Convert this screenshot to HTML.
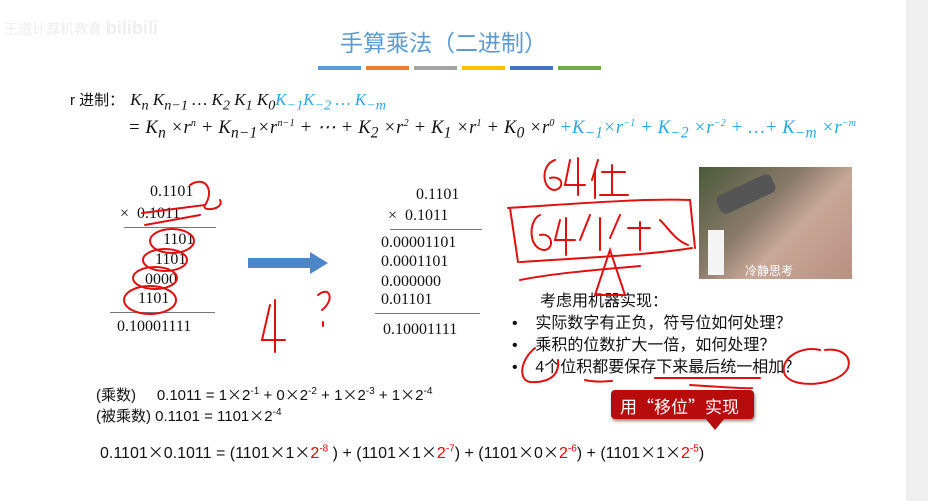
<!DOCTYPE html>
<html><head><meta charset="utf-8"><style>
body{margin:0;width:928px;height:501px;background:#fff;position:relative;overflow:hidden;font-family:"Liberation Sans","Noto Sans CJK SC",sans-serif;color:#111}
.a{position:absolute;white-space:nowrap}
.s{font-family:"Liberation Serif","Noto Serif CJK SC",serif;font-size:16px}
.bar{position:absolute;top:66px;height:4px;width:43px}
.ln{position:absolute;height:1px;background:#777}
i{font-family:"Liberation Serif",serif}
.b{color:#2aa7e0}
sup{font-size:10px}
.r{color:#e00}
.x{font-family:"Noto Sans CJK SC",sans-serif}
</style></head><body>
<div style="position:absolute;right:0;top:0;width:22px;height:501px;background:#efefef"></div>
<div class="a" style="left:4px;top:18px;font-size:14px;color:#eee">王道计算机教育 <b style="font-size:18px">bilibili</b></div>
<div class="a" style="left:340px;top:24px;font-size:23px;color:#5b9bd5">手算乘法（二进制）</div>
<div class="bar" style="left:318px;background:#5b9bd5"></div>
<div class="bar" style="left:366px;background:#ed7d31"></div>
<div class="bar" style="left:414px;background:#a5a5a5"></div>
<div class="bar" style="left:462px;background:#ffc000"></div>
<div class="bar" style="left:510px;background:#4472c4"></div>
<div class="bar" style="left:558px;background:#70ad47"></div>
<div class="a" style="left:70px;top:89px;font-size:15px">r 进制：<i style="font-size:17px;margin-left:6px">K<sub>n</sub> K<sub>n−1</sub> … K<sub>2</sub> K<sub>1</sub> K<sub>0</sub><span class="b">K<sub>−1</sub>K<sub>−2</sub> … K<sub>−m</sub></span></i></div>
<div class="a" style="left:128px;top:116px;font-size:18.5px;letter-spacing:0.2px"><i>= K<sub>n</sub> ×r<sup>n</sup> + K<sub>n−1</sub>×r<sup>n−1</sup> + ⋯ + K<sub>2</sub> ×r<sup>2</sup> + K<sub>1</sub> ×r<sup>1</sup> + K<sub>0</sub> ×r<sup>0</sup> <span class="b">+K<sub>−1</sub>×r<sup>−1</sup> + K<sub>−2</sub> ×r<sup>−2</sup> + …+ K<sub>−m</sub> ×r<sup>−m</sup></span></i></div>

<div class="a s" style="left:150px;top:183px">0.1101</div>
<div class="a s" style="left:120px;top:205px">×&nbsp;&nbsp;0.1011</div>
<div class="ln" style="left:124px;top:227px;width:92px"></div>
<div class="a s" style="left:163px;top:231px">1101</div>
<div class="a s" style="left:155px;top:251px">1101</div>
<div class="a s" style="left:145px;top:271px">0000</div>
<div class="a s" style="left:138px;top:290px">1101</div>
<div class="ln" style="left:110px;top:312px;width:105px"></div>
<div class="a s" style="left:117px;top:318px">0.10001111</div>

<svg style="position:absolute;left:248px;top:252px" width="82" height="22"><path d="M0 6H62V0L80 11L62 22V16H0Z" fill="#4a86c8"/></svg>

<div class="a s" style="left:416px;top:186px">0.1101</div>
<div class="a s" style="left:388px;top:207px">×&nbsp;&nbsp;0.1011</div>
<div class="ln" style="left:390px;top:229px;width:92px"></div>
<div class="a s" style="left:381px;top:234px">0.00001101</div>
<div class="a s" style="left:381px;top:253px">0.0001101</div>
<div class="a s" style="left:381px;top:273px">0.000000</div>
<div class="a s" style="left:381px;top:291px">0.01101</div>
<div class="ln" style="left:375px;top:313px;width:105px"></div>
<div class="a s" style="left:383px;top:321px">0.10001111</div>

<div style="position:absolute;left:699px;top:167px;width:153px;height:112px;background:linear-gradient(135deg,#4a5a3a 0%,#8a7a6a 40%,#c8a898 60%,#b89080 100%)"></div>
<div style="position:absolute;left:716px;top:184px;width:60px;height:20px;background:#555;border-radius:6px;transform:rotate(-25deg)"></div>
<div style="position:absolute;left:708px;top:230px;width:16px;height:45px;background:#f4f4f4"></div>
<div class="a" style="left:745px;top:262px;font-size:12px;color:#fff">冷静思考</div>

<div class="a" style="left:540px;top:287px;font-size:16px">考虑用机器实现：</div>
<div class="a" style="left:512px;top:309px;font-size:16px">•&nbsp;&nbsp;&nbsp;&nbsp;实际数字有正负，符号位如何处理？</div>
<div class="a" style="left:512px;top:331px;font-size:16px">•&nbsp;&nbsp;&nbsp;&nbsp;乘积的位数扩大一倍，如何处理？</div>
<div class="a" style="left:512px;top:353px;font-size:16px">•&nbsp;&nbsp;&nbsp;&nbsp;4个位积都要保存下来最后统一相加？</div>

<div style="position:absolute;left:611px;top:390px;width:143px;height:29px;background:#b80c0c;border-radius:4px;box-shadow:1px 2px 3px #888"></div>
<div style="position:absolute;left:705px;top:418px;width:0;height:0;border-left:10px solid transparent;border-right:10px solid transparent;border-top:12px solid #b80c0c"></div>
<div class="a" style="left:620px;top:393px;font-size:17px;color:#fff">用<span class="x">“</span>移位<span class="x">”</span>实现</div>

<div class="a" style="left:96px;top:384px;font-size:15px">(乘数)&nbsp;&nbsp;&nbsp;&nbsp; 0.1011 = 1<span class="x">×</span>2<sup>-1</sup> + 0<span class="x">×</span>2<sup>-2</sup> + 1<span class="x">×</span>2<sup>-3</sup> + 1<span class="x">×</span>2<sup>-4</sup></div>
<div class="a" style="left:96px;top:405px;font-size:15px">(被乘数) 0.1101 = 1101<span class="x">×</span>2<sup>-4</sup></div>
<div class="a" style="left:100px;top:439px;font-size:16px">0.1101<span class="x">×</span>0.1011 = (1101<span class="x">×</span>1<span class="x">×</span><span class="r">2<sup>-8</sup></span> ) + (1101<span class="x">×</span>1<span class="x">×</span><span class="r">2<sup>-7</sup></span>) + (1101<span class="x">×</span>0<span class="x">×</span><span class="r">2<sup>-6</sup></span>) + (1101<span class="x">×</span>1<span class="x">×</span><span class="r">2<sup>-5</sup></span>)</div>

<svg style="position:absolute;left:0;top:0" width="928" height="501" fill="none" stroke="#e01010" stroke-width="2" stroke-linecap="round">
<path d="M190 185C205 175 215 190 205 205C200 212 225 210 220 200"/>
<path d="M142 213L205 205M145 225L200 215"/>
<ellipse cx="172" cy="241" rx="22" ry="12"/>
<ellipse cx="165" cy="260" rx="22" ry="11"/>
<ellipse cx="155" cy="278" rx="22" ry="11"/>
<ellipse cx="150" cy="300" rx="26" ry="14"/>
<path d="M270 305L262 340H285M275 300L275 352"/>
<path d="M318 295C330 285 335 300 322 310M323 322L323 326"/>
<path d="M555 160C540 165 542 190 555 190C565 188 563 175 550 178M570 160L565 185H585M578 158L578 195M598 160L592 180M595 170L595 198M602 172H625M612 165V195M600 195H628"/>
<path d="M510 208L518 262M508 208C560 205 640 198 690 200L695 248M520 262C580 258 650 255 692 248"/>
<path d="M540 215C528 220 528 250 545 250C555 248 552 232 540 235M560 220L555 240H575M566 218V255M590 215L580 240M600 218V250M620 215L610 238M628 228H650M640 222V250M660 220C670 230 675 240 688 245"/>
<path d="M520 280C560 272 620 268 640 266"/>
<path d="M610 250L595 295H625Z"/>
<path d="M535 348C520 360 518 380 530 382C545 383 560 378 558 360"/>
<path d="M585 380C592 382 600 382 612 381M690 385C720 387 750 389 752 388M655 378H760"/>
<path d="M820 350C800 345 778 360 785 375C795 390 840 385 848 368C852 355 840 348 825 350"/>
</svg>
</body></html>
